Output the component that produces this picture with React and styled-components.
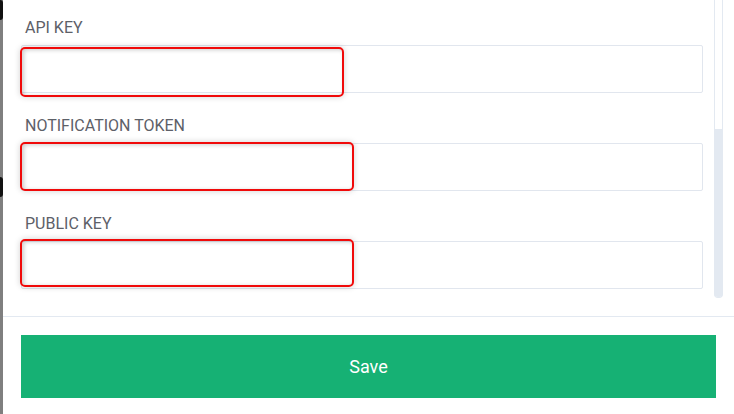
import React from 'react';
import styled, { createGlobalStyle } from 'styled-components';

const GlobalStyle = createGlobalStyle`
  html, body {
    margin: 0;
    padding: 0;
    background: #ffffff;
    font-family: Roboto, "Liberation Sans", sans-serif;
  }
`;

const Screen = styled.div`
  display: flex;
  width: 734px;
  height: 414px;
  overflow: hidden;
`;

const Backdrop = styled.div`
  width: 3px;
  flex: none;
  background: #7f7f7f;
  display: flex;
  flex-direction: column;
`;

const BackdropMark = styled.div`
  height: ${(p) => p.h}px;
  margin-top: ${(p) => p.top}px;
  background: #111;
  border-radius: 0 3px 3px 0;
`;

const Modal = styled.div`
  flex: 1;
  display: flex;
  flex-direction: column;
  background: #fff;
`;

const Body = styled.div`
  height: 298px;
  padding-bottom: 18px;
  border-bottom: 1px solid #e3e9f1;
  display: flex;
`;

const Content = styled.div`
  flex: 1;
  padding: 18px 11px 0 18px;
`;

const Field = styled.div`
  position: relative;
  margin-bottom: 23px;
`;

const Label = styled.div`
  font-size: 16px;
  line-height: 19px;
  color: #5d6068;
  margin-bottom: 8px;
  padding-left: 4px;
  text-transform: uppercase;
`;

const Input = styled.input`
  display: block;
  box-sizing: border-box;
  width: 100%;
  height: 48px;
  border: 1px solid #e1e6ee;
  border-radius: 2px;
  background: #fff;
  outline: none;
`;

const Highlight = styled.div`
  position: absolute;
  left: -1px;
  top: ${(p) => p.top}px;
  width: ${(p) => p.w}px;
  height: ${(p) => p.h}px;
  box-sizing: border-box;
  border: 2px solid #f00a0a;
  border-radius: 5px;
  box-shadow: 0 0 6px rgba(0, 0, 0, 0.18), inset 2px 1px 4px rgba(0, 0, 0, 0.2);
  pointer-events: none;
`;

const ScrollTrack = styled.div`
  width: 9px;
  margin-right: 11px;
  box-sizing: border-box;
  border: 1px solid #e3e9f1;
  border-top: none;
  border-radius: 0 0 4px 4px;
  display: flex;
  flex-direction: column;
  justify-content: flex-end;
`;

const ScrollThumb = styled.div`
  height: 168px;
  margin: 0 -1px;
  background: #e3e9f1;
  border-radius: 0 0 4px 4px;
`;

const Footer = styled.div`
  padding: 18px 18px 16px 18px;
`;

const SaveButton = styled.button`
  display: block;
  width: 100%;
  height: 63px;
  border: none;
  border-radius: 0;
  background: #16b174;
  color: #fff;
  font-family: Roboto, "Liberation Sans", sans-serif;
  font-size: 18px;
  cursor: pointer;
`;

const fields = [
  { label: 'API Key', hl: { top: 29, w: 324, h: 50 } },
  { label: 'Notification Token', hl: { top: 26, w: 334, h: 49 } },
  { label: 'Public Key', hl: { top: 25, w: 334, h: 48 } },
];

export default function App() {
  return (
    <Screen>
      <GlobalStyle />
      <Backdrop>
        <BackdropMark top={0} h={20} />
        <BackdropMark top={157} h={20} />
      </Backdrop>
      <Modal>
        <Body>
          <Content>
            {fields.map((f) => (
              <Field key={f.label}>
                <Label>{f.label}</Label>
                <Input type="text" />
                <Highlight top={f.hl.top} w={f.hl.w} h={f.hl.h} />
              </Field>
            ))}
          </Content>
          <ScrollTrack>
            <ScrollThumb />
          </ScrollTrack>
        </Body>
        <Footer>
          <SaveButton>Save</SaveButton>
        </Footer>
      </Modal>
    </Screen>
  );
}
